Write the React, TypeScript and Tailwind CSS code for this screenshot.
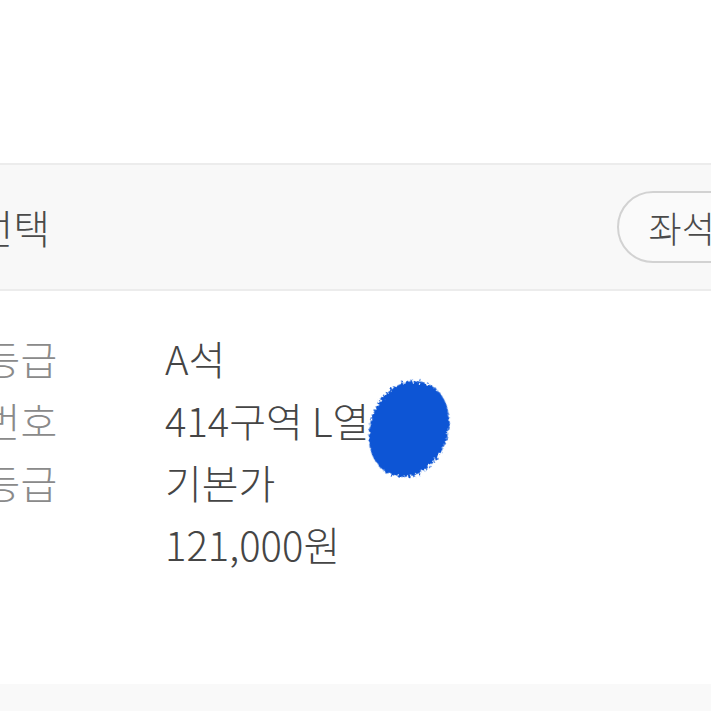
import React from "react";

const rows = [
  { label: "좌석등급", value: "A석" },
  { label: "좌석번호", value: "414구역 L열" },
  { label: "가격등급", value: "기본가" },
  { label: "", value: "121,000원" },
];

// blue marker blot that hides the seat number
function Blot() {
  return (
    <svg width="96" height="110" viewBox="0 0 96 110" className="absolute left-[362px] top-[374px]">
      <defs>
        <filter id="rough" x="-20%" y="-20%" width="140%" height="140%">
          <feTurbulence type="fractalNoise" baseFrequency="0.35" numOctaves="2" seed="3" />
          <feDisplacementMap in="SourceGraphic" scale="7" />
        </filter>
      </defs>
      <ellipse
        cx="47"
        cy="55"
        rx="39"
        ry="49"
        transform="rotate(20 47 55)"
        fill="#0b55d5"
        filter="url(#rough)"
      />
    </svg>
  );
}

function App() {
  return (
    <div
      className="relative h-[711px] w-full overflow-hidden bg-white"
      style={{ fontFamily: '"Noto Sans CJK KR", "Noto Sans", sans-serif' }}
    >
      <div className="h-[163px]" />

      {/* section header */}
      <div className="flex h-[128px] items-center justify-between border-y-2 border-[#ececec] bg-[#f8f8f8]">
        <h2 className="ml-[-106px] text-[40px] font-light text-[#4a4a4a]">좌석 선택</h2>
        <button className="mr-[-100px] h-[72px] rounded-full border-2 border-[#d2d2d2] bg-[#fafafa] pl-[30px] pr-[20px] text-[36px] font-light text-[#4a4a4a]">
          좌석 보기
        </button>
      </div>

      {/* seat info */}
      <div className="pt-[36px]">
        {rows.map((r, i) => (
          <div key={i} className="flex h-[62px] items-center">
            <span className="ml-[-90px] w-[255px] shrink-0 text-[40px] font-light text-[#8a8a8a]">{r.label}</span>
            <span className="text-[40px] font-light text-[#454545]">{r.value}</span>
          </div>
        ))}
      </div>

      <Blot />

      <div className="absolute bottom-0 left-0 h-[27px] w-full bg-[#f9f9f9]" />
    </div>
  );
}

export default App;
